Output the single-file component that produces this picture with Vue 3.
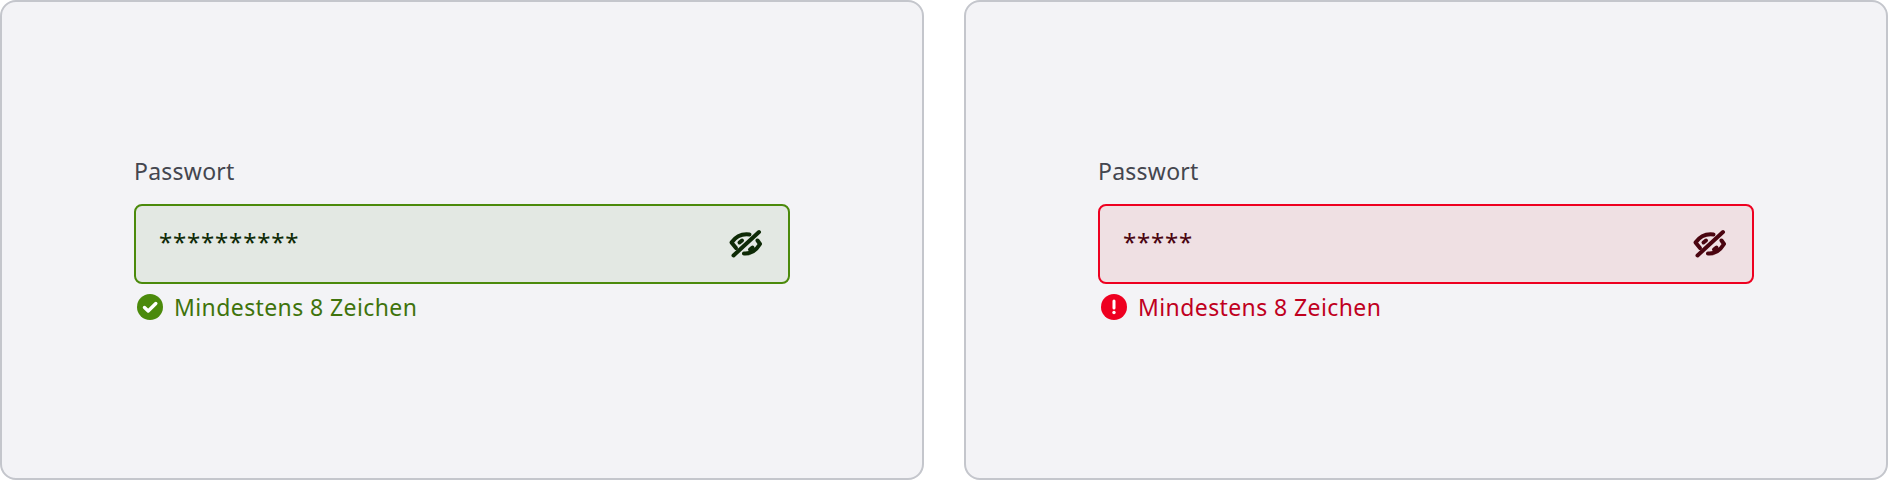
<template>
  <div class="page">
    <section v-for="field in fields" :key="field.state" class="card">
      <div class="field" :class="`field--${field.state}`">
        <label class="field__label">Passwort</label>
        <div class="field__box">
          <span class="field__value">{{ field.value }}</span>
          <svg class="field__eye" width="36" height="30" viewBox="0 0 36 30" fill="none" stroke="currentColor" stroke-width="4" stroke-linecap="round" stroke-linejoin="round">
            <path d="M31 3 5.500 26.500" />
            <path d="M21.500 5.500C14 4.500 7.500 8 3.500 13.500L8 19" />
            <path d="M11.500 13.500 14 11.500" />
            <path d="M29.500 11.500 32 15C28 21.500 22 25 16 24.500" />
            <path d="M22 20.500 24.500 18.500" />
          </svg>
        </div>
        <div class="field__hint">
          <svg v-if="field.state === 'success'" class="field__status" width="26" height="26" viewBox="0 0 26 26">
            <circle cx="13" cy="13" r="13" fill="#4b8a0b" />
            <path d="M7.500 13.500 11.200 17 18.800 9.500" fill="none" stroke="#fff" stroke-width="3.400" stroke-linecap="round" stroke-linejoin="round" />
          </svg>
          <svg v-else class="field__status" width="26" height="26" viewBox="0 0 26 26">
            <circle cx="13" cy="13" r="13" fill="#ee0020" />
            <path d="M13 7v7" stroke="#fff" stroke-width="3" stroke-linecap="round" />
            <circle cx="13" cy="18.500" r="1.700" fill="#fff" />
          </svg>
          <span>Mindestens 8 Zeichen</span>
        </div>
      </div>
    </section>
  </div>
</template>

<script setup>
const fields = [
  { state: 'success', value: '**********' },
  { state: 'error', value: '*****' },
];
</script>

<style>
body {
  background: #fff;
}
</style>

<style scoped>
.page {
  display: grid;
  grid-template-columns: 1fr 1fr;
  gap: 40px;
  width: 1888px;
  height: 480px;
  font-family: "Noto Sans", "Liberation Sans", sans-serif;
}

.card {
  display: flex;
  align-items: center;
  justify-content: center;
  box-sizing: border-box;
  background: #f3f3f6;
  border: 2px solid #c4c6cc;
  border-radius: 16px;
}

.field {
  width: 656px;
  padding-bottom: 2px;
}

.field__label {
  display: block;
  margin-bottom: 17px;
  font-size: 23px;
  letter-spacing: 0.25px;
  line-height: 32px;
  color: #44464f;
}

.field__box {
  display: flex;
  align-items: center;
  justify-content: space-between;
  box-sizing: border-box;
  height: 80px;
  padding: 0 24px 0 23px;
  border: 2px solid;
  border-radius: 8px;
}

.field__value {
  padding-bottom: 5px;
  font-size: 24px;
  letter-spacing: 0.8px;
  line-height: 32px;
}

.field__hint {
  display: flex;
  align-items: center;
  gap: 11px;
  margin-top: 7px;
  padding-left: 3px;
  font-size: 23px;
  letter-spacing: 0.4px;
  line-height: 32px;
}

.field--success .field__box {
  background: #e3e8e3;
  border-color: #4b8a0b;
  color: #0e2a06;
}

.field--success .field__hint {
  color: #3f730c;
}

.field--error .field__box {
  background: #efe0e3;
  border-color: #ee0020;
  color: #4a0510;
}

.field--error .field__hint {
  color: #c0001e;
}
</style>
